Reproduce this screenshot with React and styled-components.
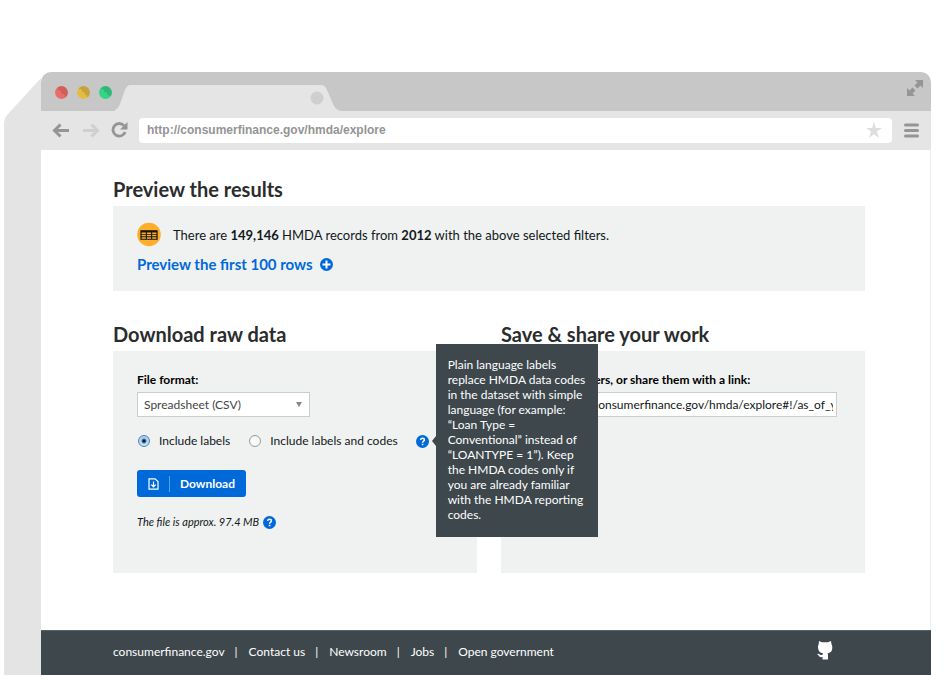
import React, { useState } from 'react';
import styled, { createGlobalStyle } from 'styled-components';

const slate = '#3d474c';
const blue = '#0069d9';
const panelGrey = '#f0f2f1';
const chromeGrey = '#e5e5e5';

const GlobalStyle = createGlobalStyle`
  * { box-sizing: border-box; }
  body {
    margin: 0;
    background: #fff;
    color: #101820;
    font-family: Lato, "Open Sans", sans-serif;
    font-size: 12px;
    line-height: 16px;
  }
`;

const Stage = styled.div`
  display: flex;
  min-height: 100vh;
  padding: 72px 19px 0 4px;
`;

const WindowEdge = styled.div`
  flex: none;
  width: 37px;
  margin-top: 6px;
  background: #e4e4e4;
  clip-path: polygon(100% 0, 4px 36px, 1px 40px, 0 45px, 0 100%, 100% 100%);
`;

const BrowserWindow = styled.div`
  flex: 1;
  min-width: 0;
  display: flex;
  flex-direction: column;
`;

const TitleBar = styled.div`
  display: flex;
  align-items: flex-end;
  height: 39px;
  padding: 0 8px 0 14px;
  background: #c7c7c7;
  border-radius: 10px 10px 0 0;
`;

const Lights = styled.div`
  display: flex;
  gap: 9px;
  align-self: center;
  padding-top: 2px;
`;

const Light = styled.span`
  width: 13px;
  height: 13px;
  border-radius: 50%;
  background: linear-gradient(45deg, ${(p) => p.$light} 50%, ${(p) => p.$dark} 50%);
`;

const Tab = styled.svg`
  display: block;
  width: 228px;
  height: 26px;
  margin-left: 3px;
`;

const ExpandIcon = styled.svg`
  width: 16px;
  height: 16px;
  margin: 8px 0 0 auto;
  align-self: flex-start;
`;

const ToolBar = styled.div`
  display: flex;
  align-items: center;
  height: 39px;
  padding: 0 12px 1px 11px;
  background: ${chromeGrey};
`;

const ToolButton = styled.button`
  display: flex;
  padding: 0;
  margin-right: ${(p) => p.$gap || 0}px;
  border: 0;
  background: none;
`;

const AddressBar = styled.div`
  flex: 1;
  display: flex;
  align-items: center;
  height: 25px;
  margin-right: 12px;
  padding: 0 10px 0 8px;
  border-radius: 4px;
  background: #fff;
`;

const Address = styled.input`
  flex: 1;
  min-width: 0;
  padding: 0;
  border: 0;
  outline: 0;
  color: #949494;
  background: none;
  font: bold 12px/16px "Liberation Sans", Arial, sans-serif;
`;

const Page = styled.main`
  flex: 1;
  padding: 26px 65px 24px 72px;
  border-right: 1px solid #efefef;
`;

const Heading = styled.h2`
  margin: 0 0 4px;
  color: #2a2c2d;
  font-size: 20px;
  font-weight: 700;
  line-height: 26px;
`;

const Panel = styled.div`
  min-height: ${(p) => p.$min}px;
  padding: ${(p) => p.$top}px 24px 16px;
  background: ${panelGrey};
`;

const Columns = styled.div`
  display: grid;
  grid-template-columns: 1fr 1fr;
  gap: 24px;
  margin-top: 30px;
`;

const Summary = styled.p`
  display: flex;
  align-items: center;
  gap: 12px;
  margin: 0 0 7px;
  font-size: 13px;
  line-height: 24px;
`;

const PreviewLink = styled.a`
  display: inline-flex;
  align-items: center;
  gap: 7px;
  color: ${blue};
  font-size: 15px;
  font-weight: 700;
  line-height: 20px;
  text-decoration: none;
`;

const FieldLabel = styled.label`
  display: block;
  margin-bottom: 4px;
  color: #000;
  font-weight: 700;
`;

const SelectBox = styled.div`
  display: grid;
  align-items: center;
  width: 173px;
  & > * { grid-area: 1 / 1; }
`;

const Select = styled.select`
  appearance: none;
  height: 25px;
  padding: 0 6px;
  border: 1px solid #ccc;
  border-radius: 0;
  background: #fff;
  color: #444;
  font: inherit;
`;

const Caret = styled.svg`
  justify-self: end;
  margin-right: 8px;
  pointer-events: none;
`;

const OptionRow = styled.div`
  display: flex;
  align-items: center;
  height: 16px;
  margin: 16px 0 21px;
`;

const Option = styled.label`
  display: flex;
  align-items: center;
  gap: 9px;
  margin-right: 18px;
  white-space: nowrap;
`;

const Radio = styled.input`
  appearance: none;
  width: 12px;
  height: 12px;
  margin: 0 0 0 1px;
  border: 1px solid #999;
  border-radius: 50%;
  background: linear-gradient(#f4f4f4, #fff);
  &:checked {
    border-color: #5b7fae;
    background: radial-gradient(circle, #0b1c33 0 1px, transparent 3px), linear-gradient(#a9cdf0, #b4e8ff);
  }
`;

const HelpSpot = styled.span`
  position: relative;
  display: flex;
`;

const HelpButton = styled.button`
  display: flex;
  padding: 0;
  border: 0;
  background: none;
`;

const Tooltip = styled.span`
  position: absolute;
  z-index: 2;
  top: -91px;
  left: 20px;
  width: 162px;
  padding: 13px 12px 15px;
  background: ${slate};
  color: #fff;
  line-height: 15px;
  white-space: nowrap;
  &::before {
    content: '';
    position: absolute;
    top: 92px;
    left: -4px;
    border: solid transparent;
    border-width: 5px 4px 5px 0;
    border-right-color: ${slate};
  }
`;

const DownloadButton = styled.button`
  display: flex;
  align-items: center;
  height: 27px;
  padding: 0 11px;
  border: 0;
  border-radius: 3px;
  background: ${blue};
  color: #fff;
  font: inherit;
  font-weight: 700;
`;

const ButtonIcon = styled.span`
  display: flex;
  align-items: center;
  height: 16px;
  margin-right: 10px;
  padding-right: 10px;
  border-right: 1px solid #5b9fe6;
`;

const FileSize = styled.p`
  display: flex;
  align-items: center;
  gap: 4px;
  margin: 17px 0 0;
  font-size: 11px;
`;

const LinkField = styled.input`
  display: block;
  width: 100%;
  max-width: 312px;
  height: 25px;
  padding: 0 3px;
  border: 1px solid #ccc;
  background: #fff;
  color: #101820;
  font: inherit;
`;

const Footer = styled.footer`
  display: flex;
  align-items: center;
  justify-content: space-between;
  height: 45px;
  padding: 0 98px 2px 72px;
  border-top: 1px solid #566065;
  background: ${slate};
`;

const FooterNav = styled.nav`
  display: flex;
  a {
    color: #fff;
    text-decoration: none;
  }
  a + a::before {
    content: '|';
    margin: 0 11px 0 10px;
  }
`;

function HelpIcon() {
  return (
    <svg width="13" height="13" viewBox="0 0 13 13" aria-hidden="true">
      <circle cx="6.5" cy="6.5" r="6.5" fill={blue} />
      <path d="M4.6 5C4.7 3.8 5.4 3.2 6.5 3.2S8.4 3.9 8.4 4.9C8.4 6.1 6.6 6.2 6.6 7.7" fill="none" stroke="#fff" strokeWidth="1.4" />
      <path d="M5.8 8.7h1.6v1.5H5.8z" fill="#fff" />
    </svg>
  );
}

export default function App() {
  const [detail, setDetail] = useState('labels');
  return (
    <>
      <GlobalStyle />
      <Stage>
        <WindowEdge />
        <BrowserWindow>
          <TitleBar>
            <Lights>
              <Light $light="#ea6c68" $dark="#cf5f5c" />
              <Light $light="#e2bc43" $dark="#c5a43b" />
              <Light $light="#35d486" $dark="#2fb974" />
            </Lights>
            <Tab viewBox="0 0 228 26" aria-hidden="true">
              <path d="M-4 26C1 26 3 23 5 19L10 5C12 1 13 0 16 0H205C209 0 210 1 212 5L218 19C220 23 222 26 228 26Z" fill={chromeGrey} />
              <circle cx="202" cy="13" r="6.5" fill="#cfcfcf" />
            </Tab>
            <ExpandIcon viewBox="0 0 16 16" fill="#959595" aria-hidden="true">
              <path d="M8 0h8v8l-2.500-2.500-3 3L7.500 5.500l3-3zM0 16V8l2.500 2.500 3-3 3 3-3 3L8 16z" />
            </ExpandIcon>
          </TitleBar>
          <ToolBar>
            <ToolButton aria-label="Back" $gap={14}>
              <svg width="17" height="15" viewBox="0 0 17 15" fill="none" stroke="#959595" strokeWidth="3"><path d="M8.500 1.500l-6 6 6 6M3 7.500h14" /></svg>
            </ToolButton>
            <ToolButton aria-label="Forward" $gap={11}>
              <svg width="17" height="15" viewBox="0 0 17 15" fill="none" stroke="#cfcfcf" strokeWidth="3"><path d="M8.500 1.500l6 6-6 6M14 7.500H0" /></svg>
            </ToolButton>
            <ToolButton aria-label="Reload" $gap={11}>
              <svg width="17" height="16" viewBox="0 0 17 16"><path d="M13 3.600A6.300 6.300 0 1 0 14.200 10" fill="none" stroke="#959595" strokeWidth="2.800" /><path d="M16.500 0v7.500H9z" fill="#959595" /></svg>
            </ToolButton>
            <AddressBar>
              <Address aria-label="Address" defaultValue="http://consumerfinance.gov/hmda/explore" />
              <svg width="16" height="16" viewBox="0 0 16 16" fill="#dedede" aria-hidden="true"><path d="M8 0l1.900 6H16l-5 3.600L12.900 16 8 12.200 3.100 16 5 9.600 0 6h6.100z" /></svg>
            </AddressBar>
            <ToolButton aria-label="Menu">
              <svg width="15" height="15" viewBox="0 0 15 15" stroke="#959595" strokeWidth="3" strokeLinecap="round"><path d="M1.500 2h12M1.500 7.500h12M1.500 13h12" /></svg>
            </ToolButton>
          </ToolBar>
          <Page>
            <Heading>Preview the results</Heading>
            <Panel $min={85} $top={16}>
              <Summary>
                <svg width="24" height="25" viewBox="0 0 25 25" aria-hidden="true">
                  <circle cx="12.500" cy="12.500" r="12.300" fill="#ffae2b" />
                  <path d="M3.500 8h18v10h-18z" fill="#151515" />
                  <path d="M4.800 10.300h4.400v1.600H4.800zM10.300 10.300h4.400v1.600h-4.400zM15.800 10.300h4.400v1.600h-4.400zM4.800 12.800h4.400v1.600H4.800zM10.300 12.800h4.400v1.600h-4.400zM15.800 12.800h4.400v1.600h-4.400zM4.800 15.300h4.400v1.600H4.800zM10.300 15.300h4.400v1.600h-4.400zM15.800 15.300h4.400v1.600h-4.400z" fill="#ffae2b" />
                </svg>
                <span>There are <strong>149,146</strong> HMDA records from <strong>2012</strong> with the above selected filters.</span>
              </Summary>
              <PreviewLink href="#preview">
                Preview the first 100 rows
                <svg width="13" height="13" viewBox="0 0 13 13" aria-hidden="true"><circle cx="6.500" cy="6.500" r="6.500" fill={blue} /><path d="M6.500 2.500v8M2.500 6.500h8" stroke="#fff" strokeWidth="2" /></svg>
              </PreviewLink>
            </Panel>
            <Columns>
              <section>
                <Heading>Download raw data</Heading>
                <Panel $min={222} $top={21}>
                  <FieldLabel htmlFor="format">File format:</FieldLabel>
                  <SelectBox>
                    <Select id="format"><option>Spreadsheet (CSV)</option></Select>
                    <Caret width="6" height="5" viewBox="0 0 6 5" aria-hidden="true"><path d="M0 0h6L3 5z" fill="#888" /></Caret>
                  </SelectBox>
                  <OptionRow>
                    <Option><Radio type="radio" name="detail" checked={detail === 'labels'} onChange={() => setDetail('labels')} />Include labels</Option>
                    <Option><Radio type="radio" name="detail" checked={detail === 'codes'} onChange={() => setDetail('codes')} />Include labels and codes</Option>
                    <HelpSpot>
                      <HelpButton aria-label="About labels" aria-describedby="labels-help"><HelpIcon /></HelpButton>
                      <Tooltip role="tooltip" id="labels-help">
                        Plain language labels<br />replace HMDA data codes<br />in the dataset with simple<br />language (for example:<br />“Loan Type =<br />Conventional” instead of<br />“LOANTYPE = 1”). Keep<br />the HMDA codes only if<br />you are already familiar<br />with the HMDA reporting<br />codes.
                      </Tooltip>
                    </HelpSpot>
                  </OptionRow>
                  <DownloadButton>
                    <ButtonIcon>
                      <svg width="11" height="12" viewBox="0 0 11 12" fill="none" stroke="#fff" strokeWidth="1.200" aria-hidden="true"><path d="M1 .8h6L10 3.500v7.700H1zM5.500 3.500v5M3.300 6.700l2.200 2.200 2.200-2.200" /></svg>
                    </ButtonIcon>
                    Download
                  </DownloadButton>
                  <FileSize>
                    <em>The file is approx. 97.4 MB</em>
                    <HelpButton aria-label="About file size"><HelpIcon /></HelpButton>
                  </FileSize>
                </Panel>
              </section>
              <section>
                <Heading>Save &amp; share your work</Heading>
                <Panel $min={222} $top={21}>
                  <FieldLabel htmlFor="share">Save your filters, or share them with a link:</FieldLabel>
                  <LinkField id="share" defaultValue="http://www.consumerfinance.gov/hmda/explore#!/as_of_year=2012" />
                </Panel>
              </section>
            </Columns>
          </Page>
          <Footer>
            <FooterNav>
              <a href="#home">consumerfinance.gov</a>
              <a href="#contact">Contact us</a>
              <a href="#news">Newsroom</a>
              <a href="#jobs">Jobs</a>
              <a href="#open">Open government</a>
            </FooterNav>
            <a href="#github" aria-label="GitHub">
              <svg width="16" height="19" viewBox="0 0 16 19" fill="#fff"><path d="M2 0l3 1.200h6L14 0l.6 3.500C15.600 5 15.600 8 14.500 10c-.8 1.400-2.300 2-4 2.200.4.500.5 1 .5 1.800v4.500H5.500V16C3 16.500 2 15.500 1.500 14.300L0 13l1.800-.3c.8.200 1 1.800 3.700 1.300 0-.8.100-1.300.5-1.800-1.700-.2-3.200-.8-4-2.200C.8 8 .7 5 1.600 3.500z" /></svg>
            </a>
          </Footer>
        </BrowserWindow>
      </Stage>
    </>
  );
}
